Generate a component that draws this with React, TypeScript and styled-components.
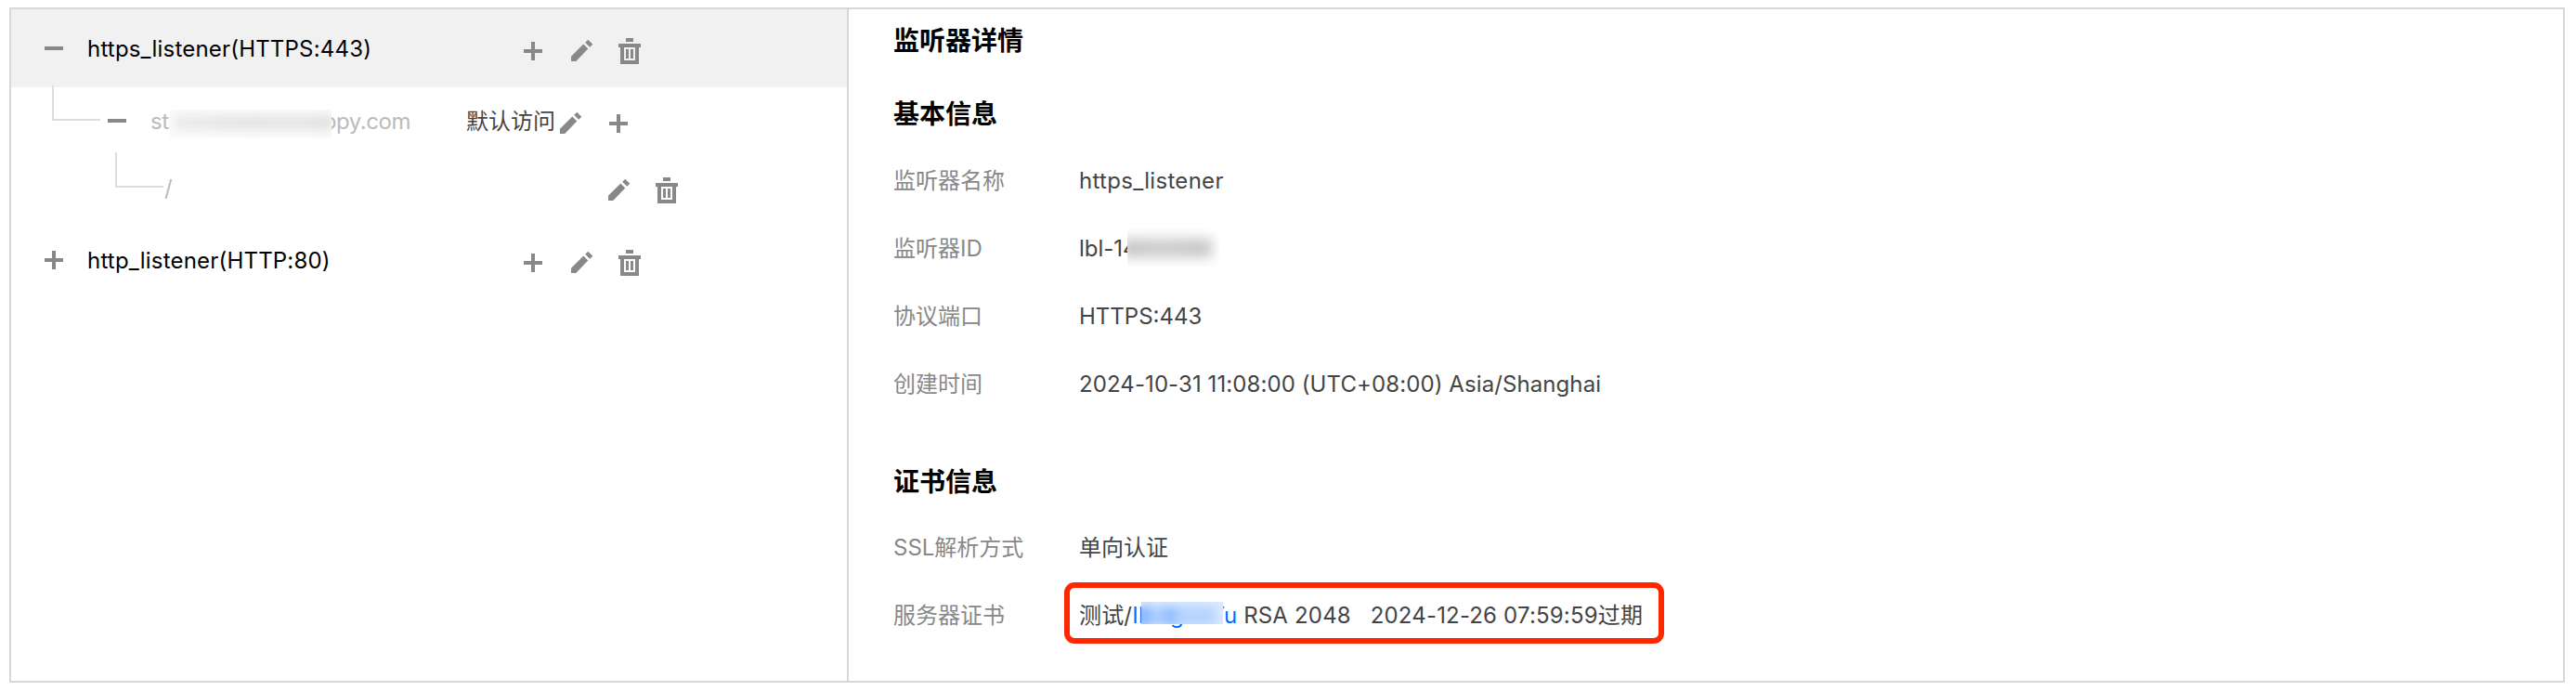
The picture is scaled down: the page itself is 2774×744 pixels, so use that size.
import React from "react";
import styled, { createGlobalStyle } from "styled-components";

const Global = createGlobalStyle`
  *, *::before, *::after { box-sizing: border-box; }
  body { margin: 0; background: #fff; }
`;

const Page = styled.div`
  padding: 8px 12px 9px 10px;
  font-family: Inter, "Noto Sans CJK SC", sans-serif;
  font-size: 24px;
  line-height: 36px;
  color: #444;
`;

const Frame = styled.div`
  display: flex;
  height: 727px;
  border: 2px solid #d6d6dc;
`;

const Tree = styled.div`
  width: 902px;
  flex: none;
  border-right: 2px solid #d6d6dc;
`;

const Row = styled.div<{ $child?: boolean; $active?: boolean; $indent: number }>`
  display: flex;
  align-items: center;
  height: ${(p) => (p.$child ? 72 : 84)}px;
  padding-left: ${(p) => p.$indent}px;
  background: ${(p) => (p.$active ? "#f1f1f1" : "transparent")};
`;

const Toggle = styled.svg`
  width: 20px;
  height: 20px;
  flex: none;
  fill: #888;
`;

const Name = styled.div<{ $width: number; $track?: number; $muted?: boolean }>`
  flex: none;
  width: ${(p) => p.$width}px;
  padding-top: 2px;
  color: ${(p) => (p.$muted ? "#bbb" : "#000")};
  letter-spacing: ${(p) => p.$track ?? 0}px;
  white-space: nowrap;
  ${Toggle} + & { margin-left: 26px; }
`;

const Elbow = styled.span<{ $gap: number }>`
  align-self: flex-start;
  flex: none;
  width: 52px;
  height: 38px;
  margin-top: -2px;
  margin-right: ${(p) => p.$gap}px;
  border-left: 2px solid #ddd;
  border-bottom: 2px solid #ddd;
`;

const Actions = styled.div<{ $gap: number }>`
  display: flex;
  align-items: center;
  gap: ${(p) => p.$gap}px;
  padding-top: 6px;
`;

const Pair = styled.div`
  display: flex;
  gap: 27px;
`;

const Glyph = styled.svg`
  display: block;
  height: 28px;
  flex: none;
  fill: #888;
`;

const Tag = styled.span`
  width: 101px;
  flex: none;
  padding-top: 2px;
`;

const Details = styled.div`
  flex: 1;
  padding: 14px 0 0 48px;
`;

const Title = styled.h2<{ $space: number }>`
  margin: 0 0 ${(p) => p.$space}px;
  font-size: 28px;
  line-height: 40px;
  font-weight: 700;
  color: #000;
`;

const Fields = styled.div`
  margin-bottom: 30px;
`;

const Field = styled.div`
  display: flex;
  height: 73px;
  line-height: 36px;
`;

const Label = styled.div`
  width: 200px;
  flex: none;
  color: #888;
`;

const Value = styled.div<{ $track?: number }>`
  position: relative;
  height: 36px;
  white-space: pre;
  letter-spacing: ${(p) => p.$track ?? 0}px;
`;

const Marked = styled(Value)`
  &::after {
    content: "";
    position: absolute;
    inset: -18px -23px -12px -16px;
    border: 6px solid #ff2600;
    border-radius: 11px;
  }
`;

const Masked = styled.span<{ $width: number; $track?: number }>`
  position: relative;
  display: inline-flex;
  justify-content: space-between;
  width: ${(p) => p.$width}px;
  letter-spacing: ${(p) => p.$track ?? 0}px;
`;

const Link = styled(Masked)`
  color: #006eff;
`;

/* Frosted strip that hides the private part of a value */
const Mask = styled.span<{ $left: number; $top: number; $width: number; $height: number }>`
  position: absolute;
  left: ${(p) => p.$left}px;
  top: ${(p) => p.$top}px;
  width: ${(p) => p.$width}px;
  height: ${(p) => p.$height}px;
  overflow: hidden;
  background: #fff;
  &::before {
    content: "";
    position: absolute;
  }
`;

const DomainMask = styled(Mask)`
  background: #fcfcfc;
  &::before {
    inset: 6px -2px 9px 4px;
    background: linear-gradient(90deg, #eaeaea, #e2e2e2 50%, #e6e6e6 75%, #dedede);
    filter: blur(6px);
  }
`;

const IdMask = styled(Mask)`
  &::before {
    inset: 12px 8px 10px -6px;
    background: linear-gradient(90deg, #c2c2c2, #cccccc 40%, #c4c4c4);
    filter: blur(7px);
  }
`;

const CertMask = styled(Mask)`
  background: #dbe9ff;
  &::before {
    inset: 5px 8px -2px -4px;
    background: linear-gradient(90deg, #6ea8ff, #b4d2ff 25%, #8dbcff 42%, #b6d3ff 55%, #b8d4ff);
    filter: blur(5px);
  }
`;

const Plus = () => (
  <Glyph width="20" viewBox="0 0 20 28"><path d="M8 4h4v8h8v4h-8v8H8v-8H0v-4h8z" /></Glyph>
);
const Pencil = () => (
  <Glyph width="24" viewBox="0 0 24 28"><path d="M0 25v-5.300L13.300 6.500l5 5L5.200 25zM15.200 4.800L18.300 1.800l5 5L20.200 9.700z" /></Glyph>
);
const Trash = () => (
  <Glyph width="24" viewBox="0 0 24 28"><path fillRule="evenodd" d="M8 0h8v4H8zM0 6h24v4h-2v18H2V10H0zM6 10v14h12V10zM8 12h3v10H8zM13 12h3v10h-3z" /></Glyph>
);
const Expander = ({ open }: { open?: boolean }) => (
  <Toggle viewBox="0 0 20 20"><path d={open ? "M0 8h20v4H0z" : "M8 0h4v8h8v4h-8v8H8v-8H0V8h8z"} /></Toggle>
);

export default function App() {
  return (
    <Page>
      <Global />
      <Frame>
        <Tree>
          <Row $active $indent={36}>
            <Expander open />
            <Name $width={470} $track={0.19}>https_listener(HTTPS:443)</Name>
            <Actions $gap={31}><Plus /><Pair><Pencil /><Trash /></Pair></Actions>
          </Row>
          <Row $child $indent={44}>
            <Elbow $gap={8} />
            <Expander open />
            <Name $width={340} $muted>
              <Masked $width={280} $track={-0.45}>
                <span>st</span>
                <span>ppy.com</span>
                <DomainMask $left={20} $top={5} $width={175} $height={31} />
              </Masked>
            </Name>
            <Tag>默认访问</Tag>
            <Actions $gap={29}><Pencil /><Plus /></Actions>
          </Row>
          <Row $child $indent={112}>
            <Elbow $gap={1} />
            <Name $width={478} $muted>/</Name>
            <Actions $gap={27}><Pencil /><Trash /></Actions>
          </Row>
          <Row $indent={36}>
            <Expander />
            <Name $width={470} $track={0.2}>http_listener(HTTP:80)</Name>
            <Actions $gap={31}><Plus /><Pair><Pencil /><Trash /></Pair></Actions>
          </Row>
        </Tree>
        <Details>
          <Title $space={39}>监听器详情</Title>
          <Title $space={34}>基本信息</Title>
          <Fields>
            <Field><Label>监听器名称</Label><Value $track={0.3}>https_listener</Value></Field>
            <Field>
              <Label>监听器ID</Label>
              <Value>lbl-14<IdMask $left={52} $top={-5} $width={99} $height={42} /></Value>
            </Field>
            <Field><Label>协议端口</Label><Value>HTTPS:443</Value></Field>
            <Field><Label>创建时间</Label><Value $track={0.09}>2024-10-31 11:08:00 (UTC+08:00) Asia/Shanghai</Value></Field>
          </Fields>
          <Title $space={33}>证书信息</Title>
          <Field><Label>SSL解析方式</Label><Value>单向认证</Value></Field>
          <Field>
            <Label>服务器证书</Label>
            <Marked $track={0.18}>
              测试/
              <Link $width={113}>
                <span>II</span><span>g</span><span>Yu</span>
                <CertMask $left={10} $top={3} $width={88} $height={24} />
              </Link>
              {" RSA 2048   2024-12-26 07:59:59过期"}
            </Marked>
          </Field>
        </Details>
      </Frame>
    </Page>
  );
}
